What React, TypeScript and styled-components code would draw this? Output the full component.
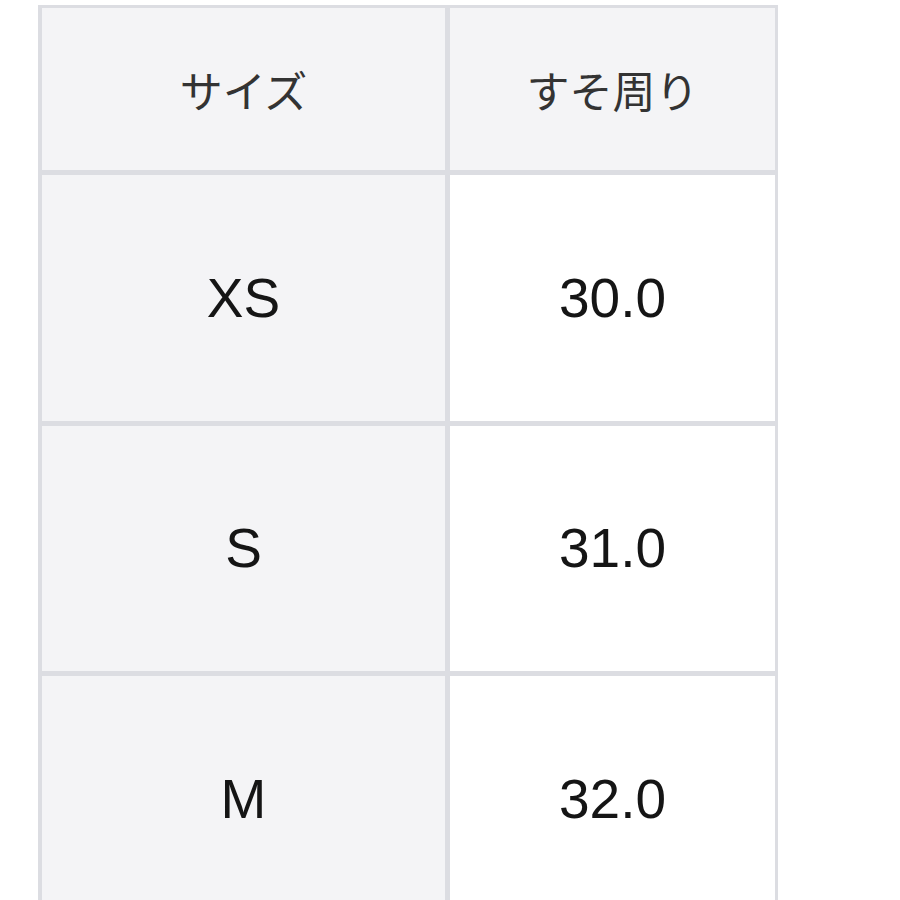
import { Fragment } from "react";
import styled, { createGlobalStyle } from "styled-components";

const GlobalStyle = createGlobalStyle`
  html, body {
    margin: 0;
    padding: 0;
    background: #ffffff;
  }
  body {
    font-family: "Liberation Sans", Arial, "Noto Sans CJK JP", sans-serif;
    overflow: hidden;
  }
`;

const Page = styled.div`
  height: 900px;
  overflow: hidden;
  padding: 5px 0 0 38px;
  box-sizing: border-box;
`;

const SizeTable = styled.div`
  display: grid;
  grid-template-columns: 403px 325px;
  grid-template-rows: 162px 246px 245px 246px;
  column-gap: 5px;
  row-gap: 5px;
  width: max-content;
  padding: 3px 3px 0 4px;
  background: #dcdde2;
`;

const Cell = styled.div<{ $head?: boolean; $shade?: boolean }>`
  display: flex;
  align-items: center;
  justify-content: center;
  background: ${(p) => (p.$shade ? "#f4f4f6" : "#ffffff")};
  color: ${(p) => (p.$head ? "#333333" : "#151515")};
  font-family: ${(p) =>
    p.$head
      ? '"Noto Sans CJK JP", "Liberation Sans", sans-serif'
      : '"Liberation Sans", Arial, sans-serif'};
  font-size: ${(p) => (p.$head ? "43px" : "55px")};
  line-height: 1;
`;

const rows = [
  { size: "XS", hem: "30.0" },
  { size: "S", hem: "31.0" },
  { size: "M", hem: "32.0" },
];

export default function App() {
  return (
    <>
      <GlobalStyle />
      <Page>
        <SizeTable>
          <Cell $head $shade>サイズ</Cell>
          <Cell $head $shade>すそ周り</Cell>
          {rows.map((r) => (
            <Fragment key={r.size}>
              <Cell $shade>{r.size}</Cell>
              <Cell>{r.hem}</Cell>
            </Fragment>
          ))}
        </SizeTable>
      </Page>
    </>
  );
}
